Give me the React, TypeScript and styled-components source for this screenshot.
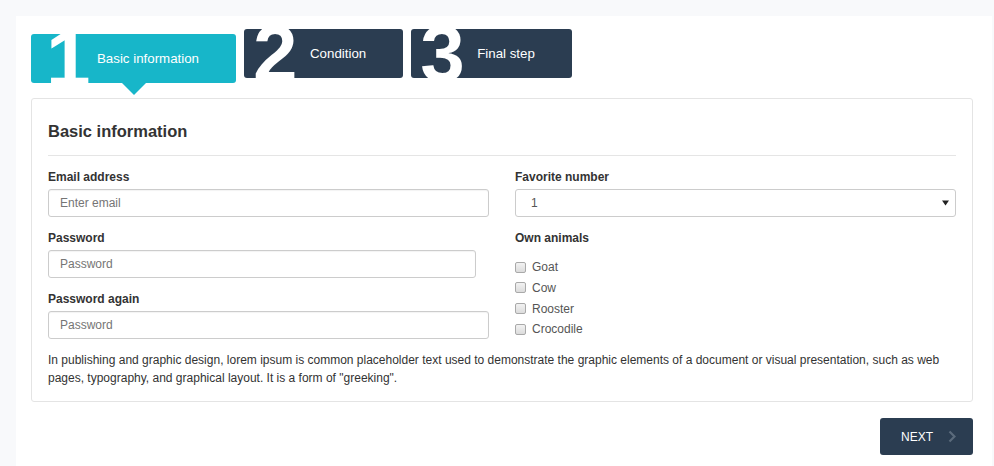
import React from 'react'
import styled, { createGlobalStyle } from 'styled-components'

const GlobalStyle = createGlobalStyle`
  body {
    margin: 0;
    background-color: #f8f9fb;
    font-family: 'Liberation Sans', Arial, sans-serif;
    color: #333;
  }
`

const Page = styled.div`
  margin: 16px 2px 0 16px;
  min-height: 450px;
  padding: 13px 19px 11px 15px;
  background-color: #fff;
  box-sizing: border-box;
`

const Steps = styled.div`
  display: flex;
  align-items: flex-start;
  gap: 8px;
`

const Step = styled.div<{ $active?: boolean }>`
  position: relative;
  height: 49px;
  margin-top: ${(p) => (p.$active ? '5px' : '0')};
  padding: 0 37px 0 66px;
  display: flex;
  align-items: center;
  border-radius: 3px;
  background-color: ${(p) => (p.$active ? '#17b6c9' : '#2b3d51')};
  color: #fff;
  font-size: 13.3px;

  &::after {
    content: '';
    display: ${(p) => (p.$active ? 'block' : 'none')};
    position: absolute;
    left: 50%;
    bottom: -12px;
    margin-left: -12px;
    border-left: 12px solid transparent;
    border-right: 12px solid transparent;
    border-top: 12px solid #17b6c9;
  }
`

const NumeralClip = styled.div`
  position: absolute;
  inset: 0;
  overflow: hidden;
  border-radius: 3px;
`

const Numeral = styled.span<{ $left: number }>`
  position: absolute;
  top: -15px;
  left: ${(p) => p.$left}px;
  font-size: 80px;
  line-height: 80px;
  font-weight: 700;
  color: #fff;
`

const StepLabel = styled.span`
  position: relative;
`

const Card = styled.div`
  margin-top: 15px;
  padding: 22px 16px 14px;
  border: 1px solid #e4e4e4;
  border-radius: 3px;
`

const Title = styled.h2`
  margin: 0;
  font-size: 16.5px;
  line-height: 20px;
  font-weight: 700;
  color: #333;
`

const Divider = styled.hr`
  margin: 14px 0 13px;
  border: none;
  border-top: 1px solid #e5e5e5;
`

const Columns = styled.div`
  display: grid;
  grid-template-columns: 1fr 1fr;
  column-gap: 26px;
`

const Field = styled.div`
  margin-bottom: 13px;
  &:last-child {
    margin-bottom: 12px;
  }
`

const Label = styled.div`
  font-size: 12px;
  line-height: 16px;
  font-weight: 700;
  color: #333;
  margin-bottom: 4px;
`

const Input = styled.input<{ $narrow?: boolean }>`
  display: block;
  width: ${(p) => (p.$narrow ? 'calc(100% - 13px)' : '100%')};
  height: 28px;
  box-sizing: border-box;
  padding: 0 11px;
  border: 1px solid #ccc;
  border-radius: 3px;
  box-shadow: inset 0 1px 1px rgba(0, 0, 0, 0.05);
  font-family: 'Liberation Sans', Arial, sans-serif;
  font-size: 12px;
  color: #555;
  ::placeholder {
    color: #999;
  }
`

const Select = styled.div`
  height: 28px;
  box-sizing: border-box;
  padding: 0 6px 0 15px;
  border: 1px solid #ccc;
  border-radius: 3px;
  display: flex;
  align-items: center;
  justify-content: space-between;
  font-size: 12px;
  color: #555;
`

const CheckList = styled.div`
  margin-top: 11px;
`

const CheckRow = styled.label`
  display: flex;
  align-items: center;
  height: 20.67px;
  font-size: 12px;
  color: #555;
`

const Box = styled.input`
  appearance: none;
  width: 11px;
  height: 11px;
  margin: 0 6px 0 0;
  border: 1px solid #a9a9a9;
  border-radius: 2px;
  background: linear-gradient(#f2f2f2, #dcdcdc);
`

const Text = styled.p`
  margin: 0;
  font-size: 12px;
  line-height: 18px;
  color: #333;
`

const Footer = styled.div`
  display: flex;
  justify-content: flex-end;
  margin-top: 16px;
`

const NextBtn = styled.button`
  width: 93px;
  height: 37px;
  padding: 0 17px 0 21px;
  display: flex;
  align-items: center;
  justify-content: space-between;
  border: none;
  border-radius: 3px;
  background-color: #2b3d51;
  color: #fff;
  font-family: 'Liberation Sans', Arial, sans-serif;
  font-size: 12px;
`

const animals = ['Goat', 'Cow', 'Rooster', 'Crocodile']

const steps = [
  { n: '1', label: 'Basic information', left: 15, active: true },
  { n: '2', label: 'Condition', left: 9 },
  { n: '3', label: 'Final step', left: 9 },
]

const App = () => {
  return (
    <>
      <GlobalStyle />
      <Page>
        <Steps>
          {steps.map((s) => (
            <Step key={s.n} $active={s.active}>
              <NumeralClip>
                <Numeral $left={s.left}>{s.n}</Numeral>
              </NumeralClip>
              <StepLabel>{s.label}</StepLabel>
            </Step>
          ))}
        </Steps>

        <Card>
          <Title>Basic information</Title>
          <Divider />
          <Columns>
            <div>
              <Field>
                <Label>Email address</Label>
                <Input type='email' placeholder='Enter email' />
              </Field>
              <Field>
                <Label>Password</Label>
                <Input type='password' placeholder='Password' $narrow />
              </Field>
              <Field>
                <Label>Password again</Label>
                <Input type='password' placeholder='Password' />
              </Field>
            </div>
            <div>
              <Field>
                <Label>Favorite number</Label>
                <Select>
                  <span>1</span>
                  <svg width='7' height='6' viewBox='0 0 7 6'>
                    <path d='M0 0.5 H7 L3.5 5.5 Z' fill='#222' />
                  </svg>
                </Select>
              </Field>
              <Label>Own animals</Label>
              <CheckList>
                {animals.map((a) => (
                  <CheckRow key={a}>
                    <Box type='checkbox' />
                    {a}
                  </CheckRow>
                ))}
              </CheckList>
            </div>
          </Columns>
          <Text>
            In publishing and graphic design, lorem ipsum is common placeholder
            text used to demonstrate the graphic elements of a document or
            visual presentation, such as web pages, typography, and graphical
            layout. It is a form of "greeking".
          </Text>
        </Card>

        <Footer>
          <NextBtn>
            NEXT
            <svg width='8' height='13' viewBox='0 0 8 13'>
              <path
                d='M1.5 1.5 L6.5 6.5 L1.5 11.5'
                fill='none'
                stroke='#5b6b7c'
                strokeWidth='2.2'
              />
            </svg>
          </NextBtn>
        </Footer>
      </Page>
    </>
  )
}

export default App
